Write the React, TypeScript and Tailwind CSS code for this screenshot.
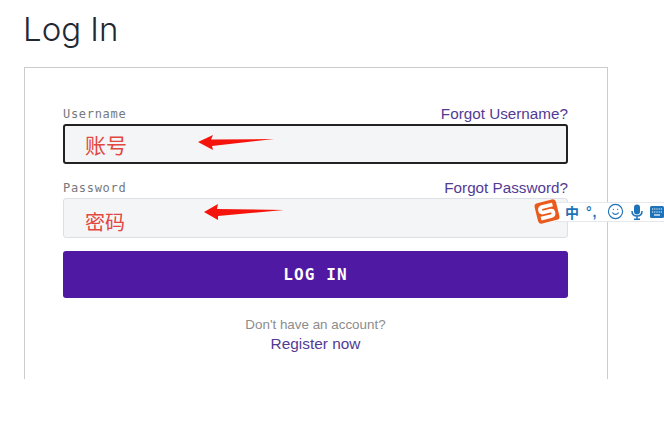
import { Smile } from "lucide-react";

const ImeBar = () => {
  return (
    <div className="absolute left-[533px] top-[198px] flex h-[27px] items-center">
      <svg width="28" height="27" viewBox="0 0 28 27" className="relative z-10">
        <g transform="rotate(-14 14 13.5)">
          <rect x="3" y="3" width="22" height="21" rx="3.5" fill="#ea5a1c" />
          <path d="M21 8 H11 Q7.5 8 7.5 11 Q7.5 13.5 11 13.5 H17 Q20 13.5 20 16 Q20 19 16.5 19 H6.5" fill="none" stroke="#fff" strokeWidth="3.8" />
        </g>
      </svg>
      <div className="-ml-[6px] flex h-[20px] w-[115px] items-center border-y border-[#e6e8ec] bg-white pl-[10px] text-[#1d72b8]">
        <span className="w-[14px] font-['Noto_Sans_CJK_SC',sans-serif] text-[14px] leading-none font-bold">中</span>
        <span className="ml-[7px] w-[14px] font-['Liberation_Sans',sans-serif] text-[14px] leading-none font-bold tracking-[1px]">°,</span>
        <Smile size={17} strokeWidth={1.6} className="ml-[7px] shrink-0" />
        <svg width="12" height="16" viewBox="0 0 12 16" className="ml-[7px] shrink-0">
          <rect x="3" y="0.5" width="6" height="10" rx="3" fill="currentColor" />
          <path d="M1 7 Q1 12 6 12 Q11 12 11 7 M6 12 V15 M3 15.2 H9" fill="none" stroke="currentColor" strokeWidth="1.5" />
        </svg>
        <svg width="14" height="12" viewBox="0 0 14 12" className="ml-[7px] shrink-0">
          <rect width="14" height="12" rx="1.5" fill="currentColor" />
          <path d="M2 3 H12 M2 6 H12" stroke="#fff" strokeWidth="1.2" strokeDasharray="1.2 1" />
          <path d="M4 9 H10" stroke="#fff" strokeWidth="1.2" />
        </svg>
      </div>
    </div>
  );
};

const Arrow = ({ points, className }: { points: string; className: string }) => {
  return (
    <svg width="90" height="18" viewBox="0 0 90 18" className={className}>
      <polygon points={points} fill="#f5140c" />
    </svg>
  );
};

const App = () => {
  return (
    <div className="relative h-[424px] w-[664px] overflow-hidden bg-white font-['Liberation_Sans',sans-serif]">
      <h1 className="h-[67px] pt-[8px] pl-[23px] font-['Inter',sans-serif] text-[33px] leading-[42px] font-light text-[#1f2933]">
        Log In
      </h1>
      <div className="ml-[24px] h-[312px] w-[584px] border border-b-0 border-[#cccccc] pt-[36px] pr-[39px] pl-[38px]">
        <div className="flex h-[20px] items-start justify-between">
          <label className="mt-[1px] font-['DejaVu_Sans_Mono',monospace] text-[12px] leading-[18px] tracking-[0.7px] text-[#75797d]">
            Username
          </label>
          <a className="text-[15.25px] leading-[20px] text-[#533a93]">Forgot Username?</a>
        </div>
        <div className="relative flex h-[40px] items-center rounded-[3px] border-2 border-[#222222] bg-[#f4f5f7] pl-[20px]">
          <span className="font-['Noto_Sans_CJK_SC',sans-serif] text-[21px] leading-none text-[#e2483f]">账号</span>
          <Arrow points="1,9 16,2 14,6.5 77,6 15,13 16,17" className="absolute top-[7px] left-[132px]" />
        </div>
        <div className="mt-[14px] flex h-[20px] items-start justify-between">
          <label className="mt-[1px] font-['DejaVu_Sans_Mono',monospace] text-[12px] leading-[18px] tracking-[0.7px] text-[#75797d]">
            Password
          </label>
          <a className="text-[15.25px] leading-[20px] text-[#533a93]">Forgot Password?</a>
        </div>
        <div className="relative flex h-[40px] items-center rounded-[3px] border border-[#dcdfe3] bg-[#f4f5f7] pt-[8px] pl-[21px]">
          <span className="font-['Noto_Sans_CJK_SC',sans-serif] text-[20px] leading-none text-[#e2483f]">密码</span>
          <Arrow points="1,9 15,1 14,6 81,7 15,13 15,17" className="absolute top-[4px] left-[139px]" />
        </div>
        <button className="mt-[13px] h-[47px] w-full rounded-[3px] bg-[#4f19a4] pt-[1px] font-['DejaVu_Sans_Mono',monospace] text-[16px] font-bold tracking-[1.1px] text-white">
          LOG IN
        </button>
        <p className="mt-[18px] text-center text-[13.4px] leading-[17px] text-[#8c8c8c]">Don't have an account?</p>
        <p className="mt-[1px] text-center text-[15.4px] leading-[20px] text-[#533a93]">Register now</p>
      </div>
      <ImeBar />
    </div>
  );
};

export default App;
